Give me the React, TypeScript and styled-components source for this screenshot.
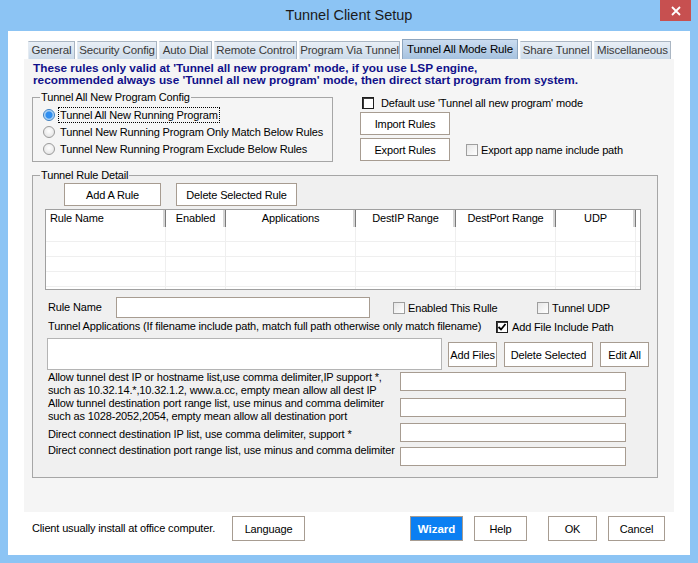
import React from 'react';
import styled, { createGlobalStyle, css } from 'styled-components';

const GlobalStyle = createGlobalStyle`
  html, body {
    margin: 0;
    padding: 0;
    background: #8cc4f4;
  }
  body {
    font-family: "Liberation Sans", Arial, sans-serif;
    font-size: 11px;
    letter-spacing: -0.15px;
    color: #000;
  }
  * {
    box-sizing: border-box;
  }
`;

const Window = styled.div`
  width: 698px;
  height: 563px;
  background: #8cc4f4;
  display: flex;
  flex-direction: column;
  overflow: hidden;
`;

const TitleBar = styled.div`
  height: 31px;
  flex: none;
  display: grid;
  grid-template-columns: 1fr auto 1fr;
  align-items: start;
`;

const Title = styled.div`
  grid-column: 2;
  font-size: 14.5px;
  letter-spacing: 0;
  line-height: 31px;
  color: #1b1b1b;
`;

const CloseButton = styled.div`
  grid-column: 3;
  justify-self: end;
  margin-right: 7px;
  width: 31px;
  height: 21px;
  background: #c75050;
  display: flex;
  align-items: center;
  justify-content: center;
`;

const Client = styled.div`
  flex: 1;
  margin: 0 8px 8px 8px;
  background: #fff;
  display: flex;
  flex-direction: column;
`;

const TabStrip = styled.div`
  margin: 8px 0 0 16px;
  padding-left: 4px;
  width: 650px;
  height: 20px;
  display: flex;
  align-items: flex-end;
`;

const Tab = styled.div<{ $w: number; $active?: boolean }>`
  width: ${p => p.$w}px;
  height: 18px;
  margin-right: 2px;
  flex: none;
  border: 1px solid #aab6c3;
  border-left-color: #e4ebf2;
  border-bottom: none;
  background: linear-gradient(#e9eff6, #ccdbea);
  color: #3a3a3a;
  font-size: 11.5px;
  line-height: 17px;
  text-align: center;
  white-space: nowrap;
  ${p =>
    p.$active &&
    css`
      height: 20px;
      line-height: 19px;
      border-color: #8ea6bf;
      background: linear-gradient(#cadcf0, #a6c2df);
      color: #000;
    `}
`;

const TabPage = styled.div`
  margin-left: 16px;
  width: 650px;
  height: 453px;
  flex: none;
  background: #f5f5f5;
  padding-left: 8px;
  display: flex;
  flex-direction: column;
`;

const BlueNote = styled.div`
  margin-top: 3px;
  padding-left: 1px;
  font-weight: bold;
  font-size: 11.8px;
  letter-spacing: 0;
  line-height: 12px;
  color: #10108a;
  white-space: nowrap;
`;

const TopRow = styled.div`
  display: flex;
  align-items: flex-start;
  margin-top: 5px;
`;

const GroupBox = styled.fieldset<{ $w: number; $h: number; $bg?: string }>`
  margin: 0;
  padding: 0;
  min-width: 0;
  width: ${p => p.$w}px;
  height: ${p => p.$h}px;
  border: 1px solid #a6a6a6;
  background: ${p => p.$bg || 'transparent'};
  flex: none;
`;

const GroupTitle = styled.legend`
  margin-left: 7px;
  padding: 0 1px;
  line-height: 13px;
  font-size: 11px;
  white-space: nowrap;
`;

const RadioList = styled.div`
  margin: 2px 0 0 10px;
  display: flex;
  flex-direction: column;
`;

const RadioRow = styled.div`
  height: 17px;
  display: flex;
  align-items: center;
  gap: 3px;
  white-space: nowrap;
`;

const RadioDot = styled.span<{ $on?: boolean }>`
  width: 12px;
  height: 12px;
  flex: none;
  border-radius: 50%;
  border: 1px solid #9a9a9a;
  background: radial-gradient(circle at 50% 40%, #ffffff, #dedede);
  ${p =>
    p.$on &&
    css`
      border-color: #3b7ec0;
      background: radial-gradient(circle, #2f8ef0 0 3px, #9ccbf5 4px, #e8f3fd 6px);
    `}
`;

const FocusLabel = styled.span<{ $focus?: boolean }>`
  padding: 0 1px;
  line-height: 14px;
  border: 1px dotted ${p => (p.$focus ? '#000' : 'transparent')};
`;

const RightCol = styled.div`
  margin-left: 27px;
  display: flex;
  flex-direction: column;
  align-items: flex-start;
`;

const CheckItem = styled.div<{ $w?: number; $gap?: number }>`
  display: flex;
  align-items: center;
  height: 13px;
  gap: ${p => p.$gap ?? 3}px;
  white-space: nowrap;
  flex: none;
  ${p => p.$w && `width: ${p.$w}px;`}
`;

const Box = styled.span<{ $dark?: boolean }>`
  width: 12px;
  height: 12px;
  flex: none;
  display: flex;
  align-items: center;
  justify-content: center;
  border: 1px solid ${p => (p.$dark ? '#1e1e1e' : '#9e9e9e')};
  background: ${p => (p.$dark ? '#fff' : 'linear-gradient(135deg, #e6e6e6, #ffffff)')};
  ${p => p.$dark && 'box-shadow: inset 1px 1px 0 #3a3a3a;'}
`;

const Button = styled.button<{ $w: number; $h?: number; $primary?: boolean }>`
  width: ${p => p.$w}px;
  height: ${p => p.$h ?? 23}px;
  flex: none;
  padding: 0;
  border: 1px solid #a79c91;
  background: #fff;
  font: inherit;
  letter-spacing: -0.15px;
  color: #000;
  white-space: nowrap;
  ${p =>
    p.$primary &&
    css`
      background: #0b7ff2;
      color: #fff;
      font-weight: bold;
      font-size: 11.5px;
      letter-spacing: 0;
    `}
`;

const Row = styled.div<{ $mt?: number; $ml?: number; $h?: number; $align?: string }>`
  display: flex;
  align-items: ${p => p.$align || 'center'};
  margin-top: ${p => p.$mt ?? 0}px;
  margin-left: ${p => p.$ml ?? 0}px;
  ${p => p.$h && `height: ${p.$h}px;`}
`;

const Spacer = styled.span<{ $w: number }>`
  width: ${p => p.$w}px;
  flex: none;
`;

const ListView = styled.div`
  margin: 3px 0 0 12px;
  width: 596px;
  height: 81px;
  border: 1px solid #a0a0a0;
  background: #fff;
  overflow: hidden;
`;

const cols = '120px 60px 130px 100px 100px 80px 1fr';

const HeaderRow = styled.div`
  display: grid;
  grid-template-columns: ${cols};
  height: 17px;
`;

const HeaderCell = styled.div<{ $left?: boolean }>`
  line-height: 16px;
  text-align: ${p => (p.$left ? 'left' : 'center')};
  padding-left: ${p => (p.$left ? '4px' : '0')};
  border-right: 1px solid #7b7b7b;
  box-shadow: inset -2px 0 0 #d5d5d5;
  white-space: nowrap;
  &:last-child {
    border-right: none;
    box-shadow: none;
  }
`;

const BodyRow = styled.div`
  display: grid;
  grid-template-columns: ${cols};
  height: 15px;
  border-bottom: 1px solid #efefef;
`;

const BodyCell = styled.div`
  border-right: 1px solid #efefef;
  &:last-child {
    border-right: none;
  }
`;

const Label = styled.span<{ $w?: number }>`
  flex: none;
  white-space: nowrap;
  line-height: 13px;
  ${p => p.$w && `width: ${p.$w}px;`}
`;

const TextBox = styled.input<{ $w: number; $h: number; $mt?: number }>`
  width: ${p => p.$w}px;
  height: ${p => p.$h}px;
  margin: ${p => p.$mt ?? 0}px 0 0 0;
  flex: none;
  padding: 0 3px;
  border: 1px solid #a79c91;
  background: #fff;
  font: inherit;
  outline: none;
`;

const TextArea = styled.textarea`
  width: 395px;
  height: 32px;
  margin-left: 14px;
  flex: none;
  padding: 2px;
  resize: none;
  border: 1px solid #b4b4b4;
  background: #fff;
  font: inherit;
  outline: none;
`;

const FileButtons = styled.div`
  display: flex;
  gap: 7px;
  margin: 4px 0 0 6px;
`;

const FieldRow = styled.div<{ $h: number }>`
  display: flex;
  align-items: flex-start;
  height: ${p => p.$h}px;
  margin-left: 15px;
`;

const FieldLabel = styled.div<{ $pt?: number }>`
  width: 352px;
  flex: none;
  padding-top: ${p => p.$pt ?? 0}px;
  line-height: 13px;
  white-space: nowrap;
`;

const BottomBar = styled.div`
  display: flex;
  align-items: center;
  margin: 4px 0 0 24px;
  height: 25px;
`;

const Check = () => (
  <svg width="10" height="10" viewBox="0 0 10 10">
    <path d="M1.5 5 L4 7.5 L8.5 2" fill="none" stroke="#000" strokeWidth="1.8" />
  </svg>
);

const tabs = [
  { label: 'General', w: 47 },
  { label: 'Security Config', w: 80 },
  { label: 'Auto Dial', w: 53 },
  { label: 'Remote Control', w: 83 },
  { label: 'Program Via Tunnel', w: 101 },
  { label: 'Tunnel All Mode Rule', w: 116, active: true },
  { label: 'Share Tunnel', w: 72 },
  { label: 'Miscellaneous', w: 77 },
];

const columns = ['Rule Name', 'Enabled', 'Applications', 'DestIP Range', 'DestPort Range', 'UDP', ''];

const fields = [
  {
    lines: ["Allow tunnel dest IP or hostname list,use comma delimiter,IP support *,", 'such as 10.32.14.*,10.32.1.2, www.a.cc, empty mean allow all dest IP'],
    h: 26, pt: 0, mt: 1,
  },
  {
    lines: ['Allow tunnel destination port range list, use minus and comma delimiter', 'such as 1028-2052,2054, empty mean allow all destination port'],
    h: 26, pt: 0, mt: 1,
  },
  { lines: ['Direct connect destination IP list, use comma delimiter, support *'], h: 21, pt: 5, mt: 0 },
  { lines: ['Direct connect destination port range list, use minus and comma delimiter'], h: 23, pt: 0, mt: 3 },
];

export default function App() {
  return (
    <>
      <GlobalStyle />
      <Window>
        <TitleBar>
          <Title>Tunnel Client Setup</Title>
          <CloseButton>
            <svg width="10" height="10" viewBox="0 0 10 10">
              <path d="M1 1 L9 9 M9 1 L1 9" stroke="#fff" strokeWidth="1.8" />
            </svg>
          </CloseButton>
        </TitleBar>
        <Client>
          <TabStrip>
            {tabs.map(t => (
              <Tab key={t.label} $w={t.w} $active={t.active}>
                {t.label}
              </Tab>
            ))}
          </TabStrip>
          <TabPage>
            <BlueNote>
              These rules only valid at 'Tunnel all new program' mode, if you use LSP engine,
              <br />
              recommended always use 'Tunnel all new program' mode, then direct start program from system.
            </BlueNote>
            <TopRow>
              <GroupBox $w={301} $h={71}>
                <GroupTitle>Tunnel All New Program Config</GroupTitle>
                <RadioList>
                  <RadioRow>
                    <RadioDot $on />
                    <FocusLabel $focus>Tunnel All New Running Program</FocusLabel>
                  </RadioRow>
                  <RadioRow>
                    <RadioDot />
                    <FocusLabel>Tunnel New Running Program Only Match Below Rules</FocusLabel>
                  </RadioRow>
                  <RadioRow>
                    <RadioDot />
                    <FocusLabel>Tunnel New Running Program Exclude Below Rules</FocusLabel>
                  </RadioRow>
                </RadioList>
              </GroupBox>
              <RightCol>
                <Row $mt={5} $ml={2}>
                  <CheckItem $gap={7}>
                    <Box $dark />
                    Default use 'Tunnel all new program' mode
                  </CheckItem>
                </Row>
                <Row $mt={3}>
                  <Button $w={90}>Import Rules</Button>
                </Row>
                <Row $mt={3}>
                  <Button $w={90}>Export Rules</Button>
                  <Spacer $w={16} />
                  <CheckItem>
                    <Box />
                    Export app name include path
                  </CheckItem>
                </Row>
              </RightCol>
            </TopRow>
            <Row $mt={7}>
              <GroupBox $w={626} $h={309} $bg="#f0f0f0">
                <GroupTitle>Tunnel Rule Detail</GroupTitle>
                <Row $mt={1} $ml={31}>
                  <Button $w={97}>Add A Rule</Button>
                  <Spacer $w={15} />
                  <Button $w={121}>Delete Selected Rule</Button>
                </Row>
                <ListView>
                  <HeaderRow>
                    {columns.map((c, i) => (
                      <HeaderCell key={i} $left={i === 0}>
                        {c}
                      </HeaderCell>
                    ))}
                  </HeaderRow>
                  {[0, 1, 2, 3, 4].map(r => (
                    <BodyRow key={r}>
                      {columns.map((_, i) => (
                        <BodyCell key={i} />
                      ))}
                    </BodyRow>
                  ))}
                </ListView>
                <Row $mt={7} $h={21}>
                  <Spacer $w={15} />
                  <Label $w={68}>Rule Name</Label>
                  <TextBox $w={254} $h={21} />
                  <Spacer $w={23} />
                  <CheckItem $w={144}>
                    <Box />
                    Enabled This Rulle
                  </CheckItem>
                  <CheckItem>
                    <Box />
                    Tunnel UDP
                  </CheckItem>
                </Row>
                <Row $mt={2} $h={13}>
                  <Spacer $w={15} />
                  <Label $w={448}>
                    Tunnel Applications (If filename include path, match full path otherwise only match filename)
                  </Label>
                  <CheckItem $gap={4}>
                    <Box $dark>
                      <Check />
                    </Box>
                    Add File Include Path
                  </CheckItem>
                </Row>
                <Row $mt={5} $align="flex-start">
                  <TextArea />
                  <FileButtons>
                    <Button $w={49} $h={25}>Add Files</Button>
                    <Button $w={89} $h={25}>Delete Selected</Button>
                    <Button $w={49} $h={25}>Edit All</Button>
                  </FileButtons>
                </Row>
                <Row $mt={1} $align="flex-start">
                  <div>
                    {fields.map((f, i) => (
                      <FieldRow key={i} $h={f.h}>
                        <FieldLabel $pt={f.pt}>
                          {f.lines.map(l => (
                            <div key={l}>{l}</div>
                          ))}
                        </FieldLabel>
                        <TextBox $w={226} $h={19} $mt={f.mt} />
                      </FieldRow>
                    ))}
                  </div>
                </Row>
              </GroupBox>
            </Row>
          </TabPage>
          <BottomBar>
            <Label $w={200}>Client usually install at office computer.</Label>
            <Button $w={73} $h={25}>Language</Button>
            <Spacer $w={105} />
            <Button $w={53} $h={25} $primary>Wizard</Button>
            <Spacer $w={11} />
            <Button $w={53} $h={25}>Help</Button>
            <Spacer $w={21} />
            <Button $w={49} $h={25}>OK</Button>
            <Spacer $w={11} />
            <Button $w={57} $h={25}>Cancel</Button>
          </BottomBar>
        </Client>
      </Window>
    </>
  );
}
